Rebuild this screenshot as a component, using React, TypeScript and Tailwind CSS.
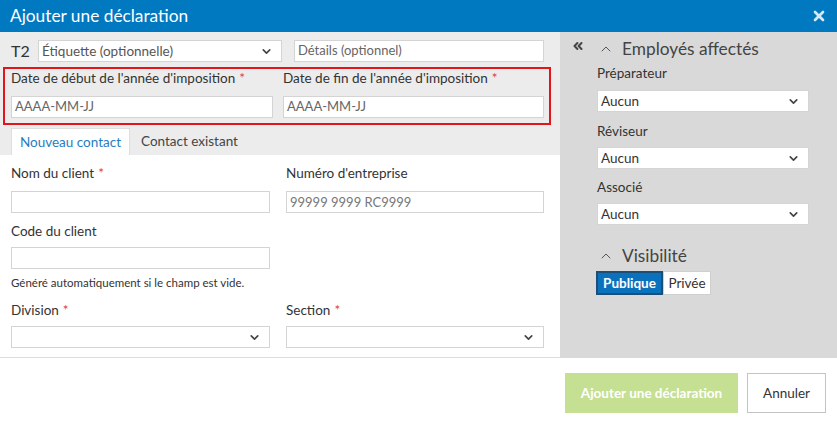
import { ChevronDown, ChevronUp, ChevronsLeft, X } from 'lucide-react';

const font = { fontFamily: '"Lato", "Noto Sans", sans-serif' };

function Req() {
  return <span className="text-[#e0393e] ml-1">*</span>;
}

function Select({ value, className }: { value?: string; className: string }) {
  return (
    <div className={`flex h-[22px] items-center justify-between border border-[#d4d4d4] bg-white pl-[3px] pr-2 text-[13.5px] text-[#333] ${className}`}>
      <span>{value}</span>
      <ChevronDown size={13} strokeWidth={3} className="text-[#444]" />
    </div>
  );
}

function Input({ placeholder, className }: { placeholder?: string; className: string }) {
  return (
    <div className={`flex h-[22px] items-center border border-[#d4d4d4] bg-white pl-[3px] text-[13px] text-[#666] ${className}`}>
      {placeholder}
    </div>
  );
}

export default function App() {
  return (
    <div className="flex h-[423px] w-[837px] flex-col overflow-hidden bg-white text-[#333]" style={font}>
      <header className="flex h-8 shrink-0 items-center justify-between bg-[#0079c1] pl-[10px] pr-[10px] text-white">
        <h1 className="text-[17.3px]">Ajouter une déclaration</h1>
        <X size={16} strokeWidth={4} className="text-[#d6e9f5]" />
      </header>

      <div className="flex h-[326px] shrink-0">
        <div className="flex w-[560px] flex-col border-b border-[#dcdcdc]">
          <div className="bg-[#ececec] pt-2">
            <div className="flex h-[22px] items-center pl-[11px]">
              <span className="w-[27px] text-[16px] leading-[22px] text-[#333]">T2</span>
              <Select value="Étiquette (optionnelle)" className="w-[244px] text-[#555]" />
              <Input placeholder="Détails (optionnel)" className="ml-3 w-[250px] text-[13.5px] text-[#555]" />
            </div>
            <div className="ml-[3px] mt-[5px] grid h-[58px] w-[548px] grid-cols-[272px_262px] border-2 border-[#e2151b] pl-[6px]">
              <div>
                <div className="h-[18px] text-[13.5px] leading-[18px] text-[#333]">Date de début de l'année d'imposition<Req /></div>
                <Input placeholder="AAAA-MM-JJ" className="mt-[9px] w-[262px]" />
              </div>
              <div>
                <div className="h-[18px] text-[13.5px] leading-[18px] text-[#333]">Date de fin de l'année d'imposition<Req /></div>
                <Input placeholder="AAAA-MM-JJ" className="mt-[9px] w-[261px]" />
              </div>
            </div>
            <div className="mt-[3px] flex h-[27px] pl-[11px] text-[13.5px]">
              <div className="flex w-[119px] items-center justify-center border-x border-t border-[#dedede] bg-white text-[#1f7dc2]">Nouveau contact</div>
              <div className="flex items-center px-[11px] text-[#444]">Contact existant</div>
            </div>
          </div>

          <div className="grid grid-cols-[275px_258px] px-[11px] pt-[9px] text-[13.5px] leading-[18px]">
            <div className="h-[18px]">Nom du client<Req /></div>
            <div className="h-[18px]">Numéro d'entreprise</div>
            <Input className="mt-[9px] w-[259px]" />
            <Input placeholder="99999 9999 RC9999" className="mt-[9px] w-[258px] text-[13.5px] text-[#777]" />
            <div className="col-span-2 mt-[9px] h-[18px]">Code du client</div>
            <Input className="col-span-2 mt-[7px] w-[259px]" />
            <div className="col-span-2 mt-[6px] h-4 text-[11.5px] leading-4 text-[#333]">Généré automatiquement si le champ est vide.</div>
            <div className="mt-[10px] h-[18px]">Division<Req /></div>
            <div className="mt-[10px] h-[18px]">Section<Req /></div>
            <Select className="mt-[7px] w-[259px]" />
            <Select className="mt-[7px] w-[258px]" />
          </div>
        </div>

        <aside className="flex flex-1 bg-[#d9d9d9]">
          <div className="w-[37px] pl-[11px] pt-[7px]">
            <ChevronsLeft size={14} strokeWidth={3.5} className="text-[#444]" />
          </div>
          <div className="flex flex-col pt-[3px] text-[13.5px] leading-[18px]">
            <div className="flex h-7 items-center text-[17.3px] text-[#444]">
              <ChevronUp size={16} strokeWidth={1.5} className="mr-[8px] ml-[1px] text-[#555]" />
              Employés affectés
            </div>
            <div className="mt-[1px] h-[18px] text-[#333]">Préparateur</div>
            <Select value="Aucun" className="mt-[8px] w-[212px]" />
            <div className="mt-[10px] h-[18px]">Réviseur</div>
            <Select value="Aucun" className="mt-[7px] w-[212px]" />
            <div className="mt-[9px] h-[18px]">Associé</div>
            <Select value="Aucun" className="mt-[7px] w-[212px]" />
            <div className="mt-[17px] flex h-7 items-center text-[17.3px] text-[#444]">
              <ChevronUp size={16} strokeWidth={1.5} className="mr-[8px] ml-[1px] text-[#555]" />
              Visibilité
            </div>
            <div className="mt-[1px] flex h-[24px] -ml-[1px]">
              <div className="flex w-[67px] items-center justify-center border-2 border-[#1c4f78] bg-[#0a72bd] font-bold text-white">Publique</div>
              <div className="flex w-[48px] items-center justify-center border border-[#cfcfcf] bg-white text-[#333]">Privée</div>
            </div>
          </div>
        </aside>
      </div>

      <footer className="flex flex-1 items-start justify-end gap-[9px] pr-[11px] pt-[15px] text-[13.5px]">
        <button className="h-10 w-[173px] bg-[#c5df93] font-bold text-white">Ajouter une déclaration</button>
        <button className="h-10 w-[79px] border border-[#c4c4c4] bg-white text-[#333]">Annuler</button>
      </footer>
    </div>
  );
}
